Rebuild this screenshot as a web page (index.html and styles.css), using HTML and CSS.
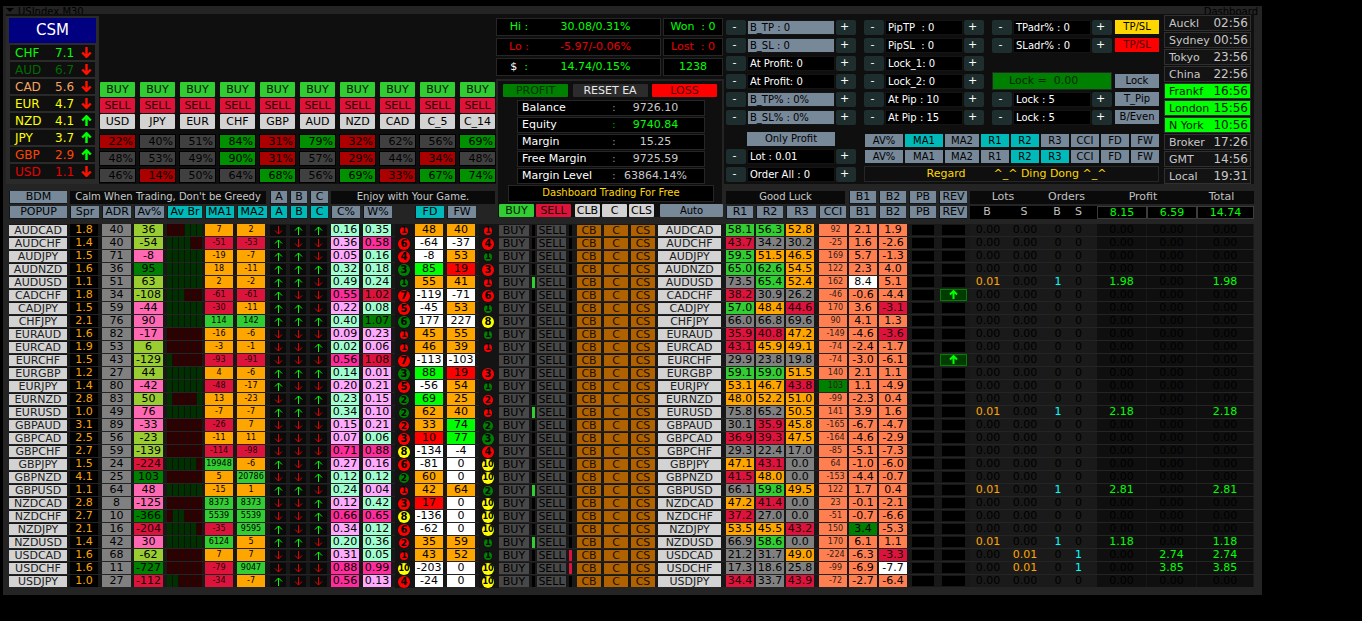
FILE: index.html
```html
<!DOCTYPE html>
<html lang="en">
<head>
  <meta charset="UTF-8" />
  <meta name="viewport" content="width=device-width, initial-scale=1.0" />
  <title>Dashboard</title>
  <link rel="stylesheet" href="styles.css">
</head>
<body>
  <svg class="defs" aria-hidden="true">
    <symbol id="down" viewBox="0 0 9 9"><path d="M4.5 0v8M1 4.5l3.5 3.5L8 4.5" fill="none" stroke="currentColor" /></symbol>
    <symbol id="up" viewBox="0 0 9 9"><path d="M4.5 9V1M1 4.5L4.5 1L8 4.5" fill="none" stroke="currentColor" /></symbol>
  </svg>

  <main class="panel">
    <div class="titlebar">
      <svg class="tri" viewBox="0 0 8 4"><path d="M0 0h8l-4 4z" /></svg>
      <span>USIndex.M30</span>
      <span class="ea-name">Dashboard</span>
    </div>

    <div class="upper">
      <section class="left">
        <div class="strength">
          <div class="csm">
            <div class="csm-title">CSM</div>
            <div class="csm-row lime"><span>CHF</span><b>7.1</b><svg class="down"><use href="#down" /></svg></div>
            <div class="csm-row green"><span>AUD</span><b>6.7</b><svg class="down"><use href="#down" /></svg></div>
            <div class="csm-row sandy"><span>CAD</span><b>5.6</b><svg class="down"><use href="#down" /></svg></div>
            <div class="csm-row yellow"><span>EUR</span><b>4.7</b><svg class="down"><use href="#down" /></svg></div>
            <div class="csm-row yellow"><span>NZD</span><b>4.1</b><svg class="up"><use href="#up" /></svg></div>
            <div class="csm-row yellow"><span>JPY</span><b>3.7</b><svg class="up"><use href="#up" /></svg></div>
            <div class="csm-row tomato"><span>GBP</span><b>2.9</b><svg class="up"><use href="#up" /></svg></div>
            <div class="csm-row red"><span>USD</span><b>1.1</b><svg class="down"><use href="#down" /></svg></div>
          </div>
          <div class="heat" id="heat"></div>
        </div>
        <div class="head head-left">
          <button>BDM</button>
          <div class="banner span-6">Calm When Trading, Don't be Greedy</div>
          <button>A</button><button>B</button><button>C</button>
          <div class="banner span-6">Enjoy with Your Game.</div>
          <button>POPUP</button><button>Spr</button><button>ADR</button><button>Av%</button>
          <button class="on">Av Br</button><button class="on">MA1</button><button class="on">MA2</button>
          <button class="on">A</button><button class="on">B</button><button class="on">C</button>
          <button>C%</button><button>W%</button><i></i><button class="on">FD</button><button>FW</button>
        </div>
      </section>

      <section class="mid">
        <div class="stats">
          <div class="stat lime"><span>Hi :</span><span>30.08/0.31%</span></div>
          <div class="won lime">Won&nbsp; : 0</div>
          <div class="stat red"><span>Lo :</span><span>-5.97/-0.06%</span></div>
          <div class="won red">Lost&nbsp; : 0</div>
          <div class="stat lime"><span><em>$</em>&nbsp; :</span><span>14.74/0.15%</span></div>
          <div class="won lime">1238</div>
        </div>
        <div class="account">
          <div class="resets">
            <button class="profit">PROFIT</button><button class="reset">RESET EA</button><button class="loss">LOSS</button>
          </div>
          <dl>
            <div><dt>Balance</dt><i>:</i><dd>9726.10</dd></div>
            <div class="eq"><dt>Equity</dt><i>:</i><dd>9740.84</dd></div>
            <div><dt>Margin</dt><i>:</i><dd>15.25</dd></div>
            <div><dt>Free Margin</dt><i>:</i><dd>9725.59</dd></div>
            <div><dt>Margin Level</dt><i>:</i><dd>63864.14%</dd></div>
          </dl>
          <div class="slogan">Dashboard Trading For Free</div>
          <div class="actions">
            <button class="buy">BUY</button><button class="sell">SELL</button>
            <button class="close">CLB</button><button class="close">C</button><button class="close">CLS</button>
            <button class="auto">Auto</button>
          </div>
        </div>
      </section>

      <section class="right">
        <div class="controls">
          <div class="col-1">
            <div class="step hl"><button>-</button><span>B_TP : 0</span><button>+</button></div>
            <div class="step hl"><button>-</button><span>B_SL : 0</span><button>+</button></div>
            <div class="step"><button>-</button><span>At Profit: 0</span><button>+</button></div>
            <div class="step"><button>-</button><span>At Profit: 0</span><button>+</button></div>
            <div class="step hl"><button>-</button><span>B_TP% : 0%</span><button>+</button></div>
            <div class="step hl"><button>-</button><span>B_SL% : 0%</span><button>+</button></div>
            <button class="only">Only Profit</button>
            <div class="step"><button>-</button><span>Lot : 0.01</span><button>+</button></div>
            <div class="step"><button>-</button><span>Order All : 0</span><button>+</button></div>
          </div>
          <div class="col-2">
            <div class="pips">
              <div>
                <div class="step"><button>-</button><span>PipTP&nbsp; : 0</span><button>+</button></div>
                <div class="step"><button>-</button><span>PipSL&nbsp; : 0</span><button>+</button></div>
                <div class="step"><button>-</button><span>Lock_1: 0</span><button>+</button></div>
                <div class="step"><button>-</button><span>Lock_2: 0</span><button>+</button></div>
                <div class="step"><button>-</button><span>At Pip : 10</span><button>+</button></div>
                <div class="step"><button>-</button><span>At Pip : 15</span><button>+</button></div>
              </div>
              <div>
                <div class="step"><button>-</button><span>TPadr% : 0</span><button>+</button></div>
                <div class="step"><button>-</button><span>SLadr% : 0</span><button>+</button></div>
                <div class="step"></div>
                <div class="lock-sum">Lock =&nbsp; 0.00</div>
                <div class="step"><button>-</button><span>Lock : 5</span><button>+</button></div>
                <div class="step"><button>-</button><span>Lock : 5</span><button>+</button></div>
              </div>
              <div class="side">
                <button class="gold">TP/SL</button>
                <button class="loss">TP/SL</button>
                <i></i>
                <button>Lock</button>
                <button>T_Pip</button>
                <button>B/Even</button>
              </div>
            </div>
            <div class="filters">
              <button>AV%</button><button class="on">MA1</button><button>MA2</button><button class="on">R1</button><button class="on">R2</button><button>R3</button><button>CCI</button><button>FD</button><button>FW</button>
              <button>AV%</button><button>MA1</button><button>MA2</button><button>R1</button><button class="on">R2</button><button class="on">R3</button><button>CCI</button><button>FD</button><button>FW</button>
            </div>
            <div class="regard"><span>Regard</span><span>^_^ Ding Dong ^_^</span></div>
          </div>
          <ul class="clocks">
            <li><span>Auckl</span><time>02:56</time></li>
            <li><span>Sydney</span><time>00:56</time></li>
            <li><span>Tokyo</span><time>23:56</time></li>
            <li><span>China</span><time>22:56</time></li>
            <li class="open"><span>Frankf</span><time>16:56</time></li>
            <li class="open"><span>London</span><time>15:56</time></li>
            <li class="open"><span>N York</span><time>10:56</time></li>
            <li><span>Broker</span><time>17:26</time></li>
            <li><span>GMT</span><time>14:56</time></li>
            <li><span>Local</span><time>19:31</time></li>
          </ul>
        </div>
        <div class="head head-right">
          <div class="banner span-4">Good Luck</div>
          <button>B1</button><button>B2</button><button>PB</button><button>REV</button>
          <div class="sum-title span-2">Lots</div><div class="sum-title span-2">Orders</div>
          <div class="sum-title span-2">Profit</div><div class="sum-title">Total</div>
          <button>R1</button><button>R2</button><button>R3</button><button>CCI</button>
          <button>B1</button><button>B2</button><button>PB</button><button>REV</button>
          <div class="sum-sub">B</div><div class="sum-sub">S</div><div class="sum-sub">B</div><div class="sum-sub last">S</div>
          <div class="sum-val">8.15</div><div class="sum-val">6.59</div><div class="sum-val">14.74</div>
        </div>
      </section>
    </div>

    <table class="pairs"><tbody id="pairs"></tbody></table>
  </main>

  <script src="app.js"></script>
</body>
</html>
```
FILE: styles.css
```css
:root {
  --left-cols: 61px 32px 32px 33px 38px 32px 33px 20px 20px 21px 32px 32px 20px 32px 32px 20px;
  --mid-cols: 33px 5px 32px 8px 27px 27px 27px 68px;
  --right-cols: 30px 30px 33px 30px 30px 30px 30px 31px 36px 38px 28px 25px 50px 50px 57px;
  --slate: #778899;
  --teal: #00b9b9;
  --frame: #242424;
}
* {
  box-sizing: border-box;
}
body {
  margin: 0;
  background: #000;
  color: #000;
  font-family: "DejaVu Sans", Verdana, sans-serif;
  font-size: 11px;
  line-height: 12px;
}
button {
  display: block;
  border: 0;
  padding: 0;
  margin: 0;
  background: var(--slate);
  color: #000;
  font: inherit;
  text-align: center;
  white-space: nowrap;
  cursor: pointer;
}
button.on {
  background: var(--teal);
}
i, em {
  font-style: normal;
}
.defs {
  display: none;
}

.lime { color: #00ff00; }
.green { color: #006c00; }
.sandy { color: #f4a460; }
.yellow { color: #ffff00; }
.tomato { color: #ff4500; }
.red { color: #e80000; }

.panel {
  width: fit-content;
  margin: 6px 0 0 3px;
  padding: 0 8px 7px 3px;
  background: var(--frame);
}
.titlebar {
  display: flex;
  align-items: center;
  height: 8px;
  margin-right: -4px;
  font-size: 10px;
}
.titlebar span {
  padding-top: 3px;
}
.titlebar .tri {
  width: 8px;
  height: 4px;
  margin-right: 4px;
}
.titlebar .ea-name {
  margin-left: auto;
}
.upper {
  display: grid;
  grid-template-columns: 490px 228px 1fr;
}

/* currency strength */
.strength {
  display: flex;
  align-items: flex-end;
  height: 170px;
  background: #0f0f0f;
}
.csm {
  width: 93px;
  height: 168px;
  padding: 2px 3px 0;
  background: #2a2a2a;
}
.csm-title {
  height: 25px;
  margin-bottom: 2px;
  background: #000080;
  color: #fff;
  font-size: 15px;
  line-height: 24px;
  text-align: center;
}
.csm-row {
  display: grid;
  grid-template-columns: 40px 26px 12px;
  align-items: center;
  height: 15px;
  margin: 0 1px 2px;
  padding-left: 5px;
  background: #0f0f0f;
  font-size: 12px;
}
.csm-row b {
  font-weight: normal;
}
.csm-row svg {
  width: 11px;
  height: 11px;
  stroke-width: 2;
}
svg.down { color: #ff1000; }
svg.up { color: #00ff00; }
.heat {
  display: grid;
  grid-template-columns: repeat(10, 37px);
  grid-template-rows: repeat(2, 16px) 19px repeat(3, 17px);
  column-gap: 3px;
}
.heat button {
  height: 15px;
  margin: 0 1px;
  border-radius: 1px;
}
.heat .pct {
  height: 15px;
  margin-top: 1px;
  padding-right: 2px;
  border: 1px solid #000;
  background: #404040;
  text-align: right;
  line-height: 14px;
}
.heat .low { background: #aa0000; }
.heat .high { background: #009000; }
.buy { background: #32cd32; color: #002000; }
.sell { background: #dc143c; color: #300000; }
.close { background: #d3d3d3; }

/* header rows */
.head {
  display: grid;
  grid-auto-rows: 13px;
  row-gap: 2px;
  padding: 7px 0 5px 3px;
}
.head button {
  margin-right: 3px;
  border: 1px solid #10161c;
  border-width: 0 0 1px 1px;
}
.head-left { grid-template-columns: var(--left-cols); }
.head-right { grid-template-columns: var(--right-cols); padding-left: 2px; }
.span-2 { grid-column: span 2; }
.span-4 { grid-column: span 4; }
.span-6 { grid-column: span 6; }
.banner {
  margin-right: 4px;
  background: #0a0a0a;
  color: #c8c8c8;
  font-size: 10px;
  text-align: center;
  white-space: nowrap;
}
.sum-title, .sum-sub {
  padding-right: 8px;
  background: #0a0a0a;
  color: #c0c0c0;
  text-align: center;
}
.sum-sub {
  padding-right: 2px;
  background: #000;
}
.sum-sub.last {
  padding-right: 12px;
}
.sum-val {
  border: 1px solid #3c3c3c;
  background: #000;
  color: #00ff00;
  text-align: center;
}

/* account */
.stats {
  display: grid;
  grid-template-columns: 165px 60px;
  gap: 2px;
  padding: 4px 0 3px;
  background: #0f0f0f;
}
.stat, .won {
  height: 18px;
  border: 1px solid #262626;
  background: #000;
  line-height: 16px;
  text-align: center;
}
.stat {
  display: grid;
  grid-template-columns: 44px 1fr;
  padding-right: 10px;
}
.stat em {
  color: #fff;
}
.account {
  padding: 3px 3px 0 5px;
  border: solid var(--frame);
  border-width: 2px 2px 0;
  background: #0f0f0f;
}
.resets {
  display: flex;
  justify-content: space-between;
  padding-right: 2px;
  margin-bottom: 3px;
}
.resets button {
  width: 65px;
  height: 13px;
  border-radius: 1px;
}
.resets .profit { background: #008000; color: #003000; }
.resets .reset { width: 75px; background: #2c2c2c; color: #e8e8e8; }
.loss { background: #ff0000; color: #500000; }
.account dl {
  margin: 0 14px;
}
.account dl div {
  display: grid;
  grid-template-columns: 90px 12px 1fr;
  height: 16px;
  margin-bottom: 1px;
  padding: 0 17px 0 4px;
  border: 1px solid #262626;
  background: #000;
  color: #fff;
  line-height: 14px;
}
.account dd {
  margin: 0;
  color: #c8c8c8;
  text-align: center;
}
.account i { color: #909090; }
.account .eq dd { color: #00ff00; }
.account .eq i { color: #00a000; }
.slogan {
  height: 17px;
  margin: 0 5px 2px;
  border: 1px solid #262626;
  background: #000;
  color: #ffd700;
  font-size: 10px;
  line-height: 14px;
  text-align: center;
}
.actions {
  display: grid;
  grid-template-columns: 35px 35px 25px 25px 25px 63px;
  column-gap: 2px;
  margin-left: -4px;
}
.actions .close { margin: 0 -2px 0 2px; }
.actions .auto { margin: 0 -6px 0 6px; font-size: 10px; }
.actions button {
  height: 13px;
  border-radius: 1px;
}

/* controls */
.controls {
  display: flex;
  height: 170px;
  padding-left: 2px;
  background: #0f0f0f;
}
.col-1 {
  margin-right: 8px;
  padding-top: 4px;
}
.step {
  display: flex;
  align-items: center;
  height: 18px;
}
.step button {
  width: 20px;
  height: 15px;
  padding-right: 3px;
  border-radius: 2px;
  background: #1e2e2e;
  color: #fff;
  line-height: 14px;
}
.step span {
  width: 78px;
  height: 15px;
  margin: 0 1px;
  padding-left: 2px;
  border: 1px solid #141414;
  background: #000;
  color: #fff;
  font-size: 10px;
  line-height: 14px;
  white-space: nowrap;
}
.col-1 .step span { width: 88px; }
.step.hl span {
  background: var(--slate);
  color: #000;
}
.only {
  width: 88px;
  height: 14px;
  margin: 6px 0 1px 21px;
  font-size: 10px;
}
.col-2 {
  padding-top: 4px;
}
.pips {
  display: flex;
  gap: 8px;
}
.lock-sum {
  height: 18px;
  padding-left: 16px;
  border: 1px solid #262626;
  background: #008000;
  color: #002800;
  line-height: 15px;
}
.side {
  display: grid;
  grid-auto-rows: 14px;
  row-gap: 4px;
  margin-left: -5px;
  padding-top: 2px;
}
.side button {
  width: 44px;
  font-size: 10px;
}
.side .gold { background: #ffd700; }
.filters {
  display: grid;
  grid-template-columns: 38px 38px 34px repeat(6, 28px);
  grid-auto-rows: 13px;
  gap: 3px 2px;
  padding: 8px 0 3px 1px;
}
.filters button {
  font-size: 10px;
}
.regard {
  display: flex;
  justify-content: center;
  gap: 28px;
  height: 16px;
  padding-left: 10px;
  border: 1px solid #262626;
  color: #ffd700;
  line-height: 14px;
}
.clocks {
  width: 87px;
  margin: 1px 0 0 5px;
  padding: 0;
  list-style: none;
}
.clocks li {
  display: flex;
  justify-content: space-between;
  height: 16px;
  margin-bottom: 1px;
  padding: 0 2px 0 4px;
  border: 1px solid #303030;
  background: #131313;
  color: #c8c8c8;
  line-height: 15px;
}
.clocks time {
  font-size: 12px;
}
.clocks .open {
  background: #00ff00;
  color: #002000;
}

/* pair table */
.pairs {
  display: block;
  padding-left: 3px;
}
.pairs tbody {
  display: block;
  background: #181818;
}
.pairs tr {
  display: grid;
  grid-template-columns: var(--left-cols) var(--mid-cols) var(--right-cols);
  height: 13px;
  border-bottom: 1px solid var(--frame);
}
.pairs td {
  display: block;
  height: 12px;
  margin-right: 4px;
  padding: 0;
  text-align: center;
  white-space: nowrap;
}
.pairs td.wide { margin-right: 5px; }
.pairs td.near { margin-right: 2px; }
.pairs td.mark { display: flex; align-items: center; justify-content: center; margin: 0; padding-right: 2px; height: 13px; background: #141414; }
.pairs td.act { margin-right: 3px; padding-top: 1px; }
.pairs td.act button {
  width: 100%;
  height: 11px;
  line-height: 12px;
  background: #484848;
}
.pairs td.act.pair button { background: #d3d3d3; color: #202020; }
.pairs td.act.cl button { background: #b06200; color: #201000; }
.pairs td.act.last { margin-right: 5px; }
.pairs td.spr { background: #000; color: #ffa500; }
.pairs td.adr { margin-right: 3px; background: #808080; }
.pairs td.small { overflow: hidden; font-size: 8px; }
.pairs td.cci { padding-left: 5px; color: #302018; }
.pairs td.tick { height: 11px; margin: 1px 2px 0 0; background: #000; }
.pairs td.tick.last { margin-right: 5px; }
.pairs td.tick.c-l { background: #32cd32; }
.pairs td.tick.c-r { background: #dc143c; }
.pairs td.arrow { height: 11px; margin-top: 1px; background: #0a0a0a; }
.pairs td svg { display: block; width: 9px; height: 9px; margin: 1px auto; }
.pairs td svg.down { color: #e00000; }
.pairs td.bars {
  display: grid;
  grid-template-columns: repeat(6, 5px);
  gap: 1px;
  margin-right: 3px;
  background: #0f0f0f;
}
.bars i { background: #003000; }
.bars i.dn { background: #300000; }
.pairs td.box { height: 10px; margin: 1px 5px 1px 3px; background: #000; }
.pairs td.box.rev { height: 12px; margin: 0 3px 0 1px; border: 1px solid #008000; background: #003c00; }
.pairs td.box.rev svg { margin: 0 auto; stroke-width: 2; }
.pairs td.sum { margin-right: 0; background: #1a1a1a; color: #000; }
.pairs td.sum.last { padding-right: 12px; }
.pairs td.money { margin-right: 1px; background: #0f0f0f; color: #000; }
.pairs td.lot { color: #ffa500; }
.pairs td.cnt { color: #00ffff; }
.pairs td.gain { color: #00ff00; }

.c-y { background: #9acd32; }
.c-p { background: #ff69b4; }
.c-g { background: #008000; }
.c-r { background: #dc143c; color: #200008; }
.c-o { background: #ffa500; }
.c-l { background: #32cd32; }
.c-a { background: #a0ffd0; }
.c-v { background: #ffaaff; }
.c-k { background: #ff2c9c; }
.c-w { background: #fff; }
.c-L { background: #00ff00; }
.c-R { background: #ff0000; }
.c-n { background: #808080; }
.c-c { background: #ff7f50; }

.dot {
  display: flex;
  align-items: center;
  justify-content: center;
  width: 12px;
  height: 12px;
  border-radius: 50%;
  font-size: 10px;
  font-weight: bold;
  line-height: 12px;
}
.dot-r { background: #ff0000; }
.dot-g { background: #008000; }
.dot-y { background: #ffff00; }
.dot.mini { width: 8px; height: 8px; font-size: 8px; line-height: 8px; }
.dot.two { width: 10px; height: 10px; font-size: 9px; line-height: 10px; }
.dot.ten { font-size: 8px; }
```
FILE: app.js
```js
// pair, spread, adr, av%, bars, ma1, ma2, arrows, c%, w%, dot, fd, fw, dot, r1, r2, r3, cci, b1, b2, rev, order
const rows = `
AUDCAD 1.8 40 y36 rrrggg o7 o2 duu a0.16 a0.35 r1 o48 o40 r1 l58.1 l56.3 o52.8 c92 c2.1 c1.9
AUDCHF 1.4 40 y-54 ggggrr r-51 r-53 udd v0.36 k0.58 r6 w-64 w-37 r4 r43.7 n34.2 n30.2 c-25 c1.6 c-2.6
AUDJPY 1.5 71 p-8 gggggg o-19 o-7 uud v0.05 a0.16 r4 w-8 o53 g1 l59.5 o51.5 o46.5 c169 c5.7 c-1.3
AUDNZD 1.6 36 g95 gggggg o18 o-11 uuu a0.32 a0.18 g3 L85 R19 r3 l65.0 l62.6 o54.5 c122 c2.3 c4.0
AUDUSD 1.1 51 y63 gggggg o2 o-2 uud a0.49 a0.24 g1 o55 o41 r1 n73.5 l65.4 o52.4 c162 w8.4 c5.1 - B1.98
CADCHF 1.8 34 y-108 gggrrr r-61 r-61 udd k0.55 r1.02 r7 w-119 w-71 r6 r38.2 n30.9 n26.2 c-46 c-0.6 c-4.4 rev
CADJPY 1.5 59 p-44 gggggg r-30 o-11 uud v0.22 a0.08 r5 w-45 o53 g1 l57.0 o48.4 r44.6 c170 c3.6 r-3.1
CHFJPY 2.1 76 p90 gggggg l114 l142 uuu a0.40 g1.07 g6 w177 w227 y8 n66.0 n66.8 n69.6 c90 c4.1 c1.3
EURAUD 1.6 82 p-17 rrrrrr o-16 o-6 ddd v0.09 v0.23 r1 o45 o55 g1 r35.9 r40.8 o47.2 c-149 c-4.6 r-3.6
EURCAD 1.9 53 y6 rrrrrr o-3 o-1 ddu a0.02 v0.06 r1 o46 o39 r1 r43.1 o45.9 o49.1 c-74 c-2.4 c-1.7
EURCHF 1.5 43 y-129 grrrrr r-93 r-91 ddd k0.56 r1.08 r7 w-113 w-103 - n29.9 n23.8 n19.8 c-74 c-3.0 c-6.1 rev
EURGBP 1.2 27 y44 gggggg o4 o-6 uuu a0.14 v0.01 g3 L88 R19 r3 l59.1 l59.0 o51.5 c140 c2.1 c1.1
EURJPY 1.4 80 p-42 gggggg r-48 o-17 udd v0.20 v0.21 r5 w-56 o54 g1 o53.1 o46.7 r43.8 g103 c1.1 c-4.9
EURNZD 2.8 83 y50 grrrrg o13 o-23 duu a0.23 v0.15 g2 L69 o25 r2 o48.0 o52.2 o51.0 c-99 c-2.3 c0.4
EURUSD 1.0 49 p76 gggggg o-7 o-7 uud a0.34 v0.10 g2 o62 o40 r1 n75.8 n65.2 o50.5 c141 c3.9 c1.6 - B2.18
GBPAUD 3.1 89 p-33 rrrrrr r-26 o7 ddd v0.15 v0.21 r2 o33 L74 g2 n30.1 r35.9 o45.8 c-165 c-6.7 c-4.7
GBPCAD 2.5 56 y-23 rrrrrr o-11 o11 ddd v0.07 a0.06 r3 R10 L77 g3 r36.9 r39.3 o47.5 c-164 c-4.6 c-2.9
GBPCHF 2.7 59 y-139 rrrrrr r-114 r-98 ddd k0.71 k0.88 y8 w-134 w-4 r4 n29.3 n22.4 n17.0 c-85 c-5.1 c-7.3
GBPJPY 1.5 24 r-224 gggggr l19948 o-6 udu v0.27 v0.16 r6 w-81 w0 y10 o47.1 r43.1 n0.0 c64 c-1.0 c-6.0
GBPNZD 4.1 25 g103 rrrrrr o5 l20786 ddu a0.12 a0.12 g2 o60 w0 y10 r41.5 o48.0 n0.0 c-153 c-4.4 c-0.7
GBPUSD 1.1 64 p48 gggggg o-15 o1 uud a0.24 v0.04 r1 o42 o64 g2 n66.1 l59.8 o49.5 c122 c1.7 c0.4 - B2.81
NZDCAD 2.8 8 p-125 rrrrrr l8373 l8373 ddu v0.12 a0.42 r3 R17 w0 y10 o47.2 r41.4 n0.0 c23 c-0.1 c-2.1
NZDCHF 2.7 10 g-366 rggrrr l5539 l5539 ddu k0.66 k0.65 y8 w-136 w0 y10 r37.2 n27.0 n0.0 c-51 c-0.7 c-6.6
NZDJPY 2.1 16 r-204 gggggr r-35 l9595 udu v0.34 a0.12 r6 w-62 w0 y10 o53.5 o45.5 r43.2 c150 g3.4 c-5.3
NZDUSD 1.4 42 p30 gggggg l6124 o5 uud a0.20 a0.36 r2 o35 o59 g1 n66.9 l58.6 n0.0 c170 c6.1 c1.1 - B1.18
USDCAD 1.6 68 y-62 rrrrrr o7 o7 ddu v0.31 a0.05 r1 o43 o52 g1 n21.2 n31.7 o49.0 c-224 c-6.3 r-3.3 - S2.74
USDCHF 1.6 11 g-727 rrrrrr r-79 l9047 ddd k0.88 k0.99 y10 w-203 w0 y10 n17.3 n18.6 n25.8 c-99 c-6.9 w-7.7 - S3.85
USDJPY 1.0 27 r-112 ggrrrr r-34 o-7 udd k0.56 v0.13 r4 w-24 w0 y10 r34.4 n33.7 r43.9 c-72 c-2.7 c-6.4
`.trim().split("\n").map(line => line.split(" "));

const td = (cls, html = "") => `<td class="${cls}">${html}</td>`;
const val = (v, cls = "") => td(`c-${v[0]} ${cls}`, v.slice(1));
const btn = (text, cls = "") => td(`act ${cls}`, `<button>${text}</button>`);
const arrow = dir => `<svg class="${dir}"><use href="#${dir}"/></svg>`;

function dot(v) {
  if (v === "-") return td("mark");
  const n = v.slice(1);
  const size = { 1: "mini", 2: "two", 10: "ten" }[n] || "";
  return td("mark", `<span class="dot dot-${v[0]} ${size}">${n}</span>`);
}

function orderCells(order) {
  const side = order ? order[0] : "";
  const pl = order ? order.slice(1) : "0.00";
  const buy = side === "B", sell = side === "S";
  return td(buy ? "sum lot" : "sum", buy ? "0.01" : "0.00") +
    td(sell ? "sum lot" : "sum", sell ? "0.01" : "0.00") +
    td(buy ? "sum cnt" : "sum", buy ? 1 : 0) +
    td(sell ? "sum last cnt" : "sum last", sell ? 1 : 0) +
    td(buy ? "money gain" : "money", buy ? pl : "0.00") +
    td(sell ? "money gain" : "money", sell ? pl : "0.00") +
    td(order ? "money gain" : "money", pl);
}

document.getElementById("pairs").innerHTML = rows.map(r => {
  const [pair, spr, adr, av, bars, ma1, ma2, arrows, c, w, d1, fd, fw, d2, r1, r2, r3, cci, b1, b2, rev, order] = r;
  return "<tr>" +
    btn(pair, "pair") + td("spr", spr) + td("adr", adr) + val(av) +
    td("bars", [...bars].map(b => `<i class="${b === "r" ? "dn" : ""}"></i>`).join("")) +
    val(ma1, "small") + val(ma2, "small wide") +
    [...arrows].map(a => td("arrow", arrow(a === "u" ? "up" : "down"))).join("") +
    val(c) + val(w) + dot(d1) + val(fd) + val(fw) + dot(d2) +
    btn("BUY") + td(order && order[0] === "B" ? "tick c-l" : "tick") +
    btn("SELL") + td(order && order[0] === "S" ? "tick last c-r" : "tick last") +
    btn("CB", "cl") + btn("C", "cl") + btn("CS", "cl") + btn(pair, "pair last") +
    val(r1, "near") + val(r2, "near") + val(r3, "wide") +
    val(cci, "small cci near") + val(b1, "near") + val(b2, "near") +
    td("box") + (rev === "rev" ? td("box rev", arrow("up")) : td("box")) +
    orderCells(order) + "</tr>";
}).join("");

// currency heat map: three timeframes per currency
const heat = {
  names: ["USD", "JPY", "EUR", "CHF", "GBP", "AUD", "NZD", "CAD", "C_5", "C_14"],
  pct: [
    [22, 40, 51, 84, 31, 79, 32, 62, 56, 69],
    [48, 53, 49, 90, 31, 57, 29, 44, 34, 48],
    [46, 14, 50, 64, 68, 56, 69, 33, 67, 74]
  ]
};
const level = n => n < 40 ? "low" : n > 64 ? "high" : "";

document.getElementById("heat").innerHTML =
  heat.names.map(() => `<button class="buy">BUY</button>`).join("") +
  heat.names.map(() => `<button class="sell">SELL</button>`).join("") +
  heat.names.map(n => `<button class="close">${n}</button>`).join("") +
  heat.pct.flat().map(n => `<div class="pct ${level(n)}">${n}%</div>`).join("");
```
